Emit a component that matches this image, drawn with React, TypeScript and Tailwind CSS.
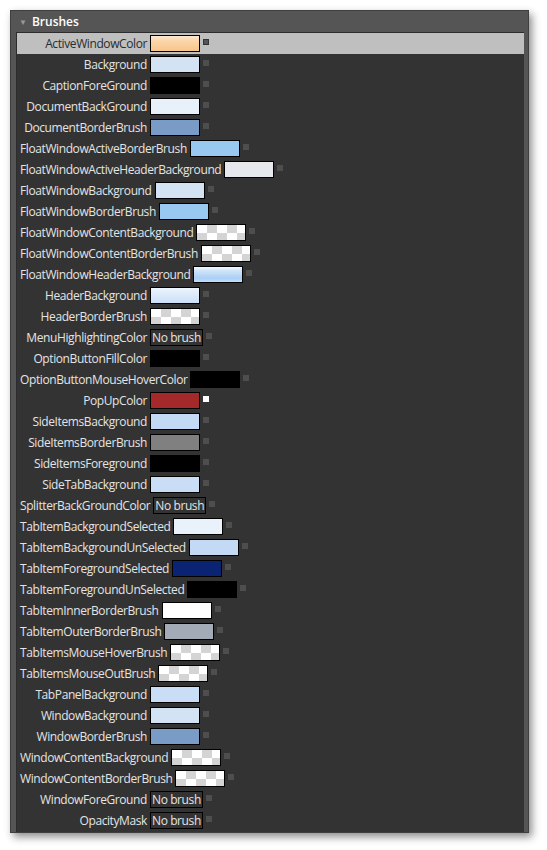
import React from "react";

type Brush =
  | { kind: "solid"; color: string }
  | { kind: "gradient"; cls: string }
  | { kind: "checker" }
  | { kind: "none" };

const checker =
  "bg-[conic-gradient(#d4d4d4_25%,#ffffff_0_50%,#d4d4d4_0_75%,#ffffff_0)] bg-size-[20px_16px]";

const brushes: { name: string; brush: Brush; local?: boolean }[] = [
  {
    name: "ActiveWindowColor",
    brush: {
      kind: "gradient",
      cls: "bg-[linear-gradient(#fde7cc,#fbd5a8_35%,#f7c68b)]",
    },
  },
  { name: "Background", brush: { kind: "solid", color: "bg-[#d4e3f4]" } },
  { name: "CaptionForeGround", brush: { kind: "solid", color: "bg-black" } },
  { name: "DocumentBackGround", brush: { kind: "solid", color: "bg-[#e8f0fa]" } },
  { name: "DocumentBorderBrush", brush: { kind: "solid", color: "bg-[#7a9bc6]" } },
  { name: "FloatWindowActiveBorderBrush", brush: { kind: "solid", color: "bg-[#99c8f0]" } },
  { name: "FloatWindowActiveHeaderBackground", brush: { kind: "solid", color: "bg-[#e5e9ee]" } },
  { name: "FloatWindowBackground", brush: { kind: "solid", color: "bg-[#d4e3f4]" } },
  { name: "FloatWindowBorderBrush", brush: { kind: "solid", color: "bg-[#99c8f0]" } },
  { name: "FloatWindowContentBackground", brush: { kind: "checker" } },
  { name: "FloatWindowContentBorderBrush", brush: { kind: "checker" } },
  {
    name: "FloatWindowHeaderBackground",
    brush: {
      kind: "gradient",
      cls: "bg-[linear-gradient(#f4f9fe,#cfe4f9_25%,#a9d0f5_75%,#c4e0fa)]",
    },
  },
  {
    name: "HeaderBackground",
    brush: {
      kind: "gradient",
      cls: "bg-[linear-gradient(#eef5fd,#dbe9fa_50%,#cde0f7)]",
    },
  },
  { name: "HeaderBorderBrush", brush: { kind: "checker" } },
  { name: "MenuHighlightingColor", brush: { kind: "none" } },
  { name: "OptionButtonFillColor", brush: { kind: "solid", color: "bg-black" } },
  { name: "OptionButtonMouseHoverColor", brush: { kind: "solid", color: "bg-black" } },
  { name: "PopUpColor", brush: { kind: "solid", color: "bg-[#a3292b]" }, local: true },
  { name: "SideItemsBackground", brush: { kind: "solid", color: "bg-[#c4d9f3]" } },
  { name: "SideItemsBorderBrush", brush: { kind: "solid", color: "bg-[#808080]" } },
  { name: "SideItemsForeground", brush: { kind: "solid", color: "bg-black" } },
  { name: "SideTabBackground", brush: { kind: "solid", color: "bg-[#c9ddf6]" } },
  { name: "SplitterBackGroundColor", brush: { kind: "none" } },
  { name: "TabItemBackgroundSelected", brush: { kind: "solid", color: "bg-[#e9f1fb]" } },
  { name: "TabItemBackgroundUnSelected", brush: { kind: "solid", color: "bg-[#c4d9f3]" } },
  { name: "TabItemForegroundSelected", brush: { kind: "solid", color: "bg-[#0b2373]" } },
  { name: "TabItemForegroundUnSelected", brush: { kind: "solid", color: "bg-black" } },
  { name: "TabItemInnerBorderBrush", brush: { kind: "solid", color: "bg-white" } },
  { name: "TabItemOuterBorderBrush", brush: { kind: "solid", color: "bg-[#a3acb6]" } },
  { name: "TabItemsMouseHoverBrush", brush: { kind: "checker" } },
  { name: "TabItemsMouseOutBrush", brush: { kind: "checker" } },
  { name: "TabPanelBackground", brush: { kind: "solid", color: "bg-[#c9ddf6]" } },
  { name: "WindowBackground", brush: { kind: "solid", color: "bg-[#d4e3f4]" } },
  { name: "WindowBorderBrush", brush: { kind: "solid", color: "bg-[#7a9bc6]" } },
  { name: "WindowContentBackground", brush: { kind: "checker" } },
  { name: "WindowContentBorderBrush", brush: { kind: "checker" } },
  { name: "WindowForeGround", brush: { kind: "none" } },
  { name: "OpacityMask", brush: { kind: "none" } },
];

function Swatch({ brush }: { brush: Brush }) {
  if (brush.kind === "none") {
    return (
      <div className="flex h-[17px] min-w-[50px] items-center border border-black px-px leading-none">
        No brush
      </div>
    );
  }
  const fill =
    brush.kind === "solid"
      ? brush.color
      : brush.kind === "gradient"
        ? brush.cls
        : checker;
  return (
    <div className="h-[17px] w-[50px] border border-black">
      <div className={`h-full w-full ${fill}`} />
    </div>
  );
}

export default function App() {
  return (
    <div className="min-h-[850px] bg-white pl-[10px] pt-[10px] font-['Open_Sans',sans-serif] text-[12px] tracking-[-0.4px]">
      <div className="w-[519px] border border-[#3f3f3f] bg-[#555555] shadow-[3px_4px_8px_rgba(0,0,0,0.45)]">
        <div className="flex h-[21px] items-center gap-[5px] pl-[8px] font-semibold tracking-normal text-white">
          <span className="text-[8px] text-[#9a9a9a]">▼</span>
          Brushes
        </div>
        <div className="ml-[5px] mr-[4px] border-l border-t border-[#2c2c2c] bg-[#333333] pb-px">
          {brushes.map(({ name, brush, local }, i) => {
            const selected = i === 0;
            return (
              <div
                key={name}
                className={`flex h-[21px] items-center pl-[3px] ${
                  selected ? "bg-[#bfbfbf] text-[#2b2b2b]" : "text-[#e4e4e4]"
                }`}
              >
                <span className="min-w-[130px] whitespace-nowrap pr-[3px] text-right">
                  {name}
                </span>
                <Swatch brush={brush} />
                <span
                  className={`ml-[3px] mb-[3px] size-[6px] ${
                    local
                      ? "bg-white"
                      : selected
                        ? "border border-[#333] bg-[#555]"
                        : "bg-[#4e4e4e]"
                  }`}
                />
              </div>
            );
          })}
        </div>
      </div>
    </div>
  );
}
